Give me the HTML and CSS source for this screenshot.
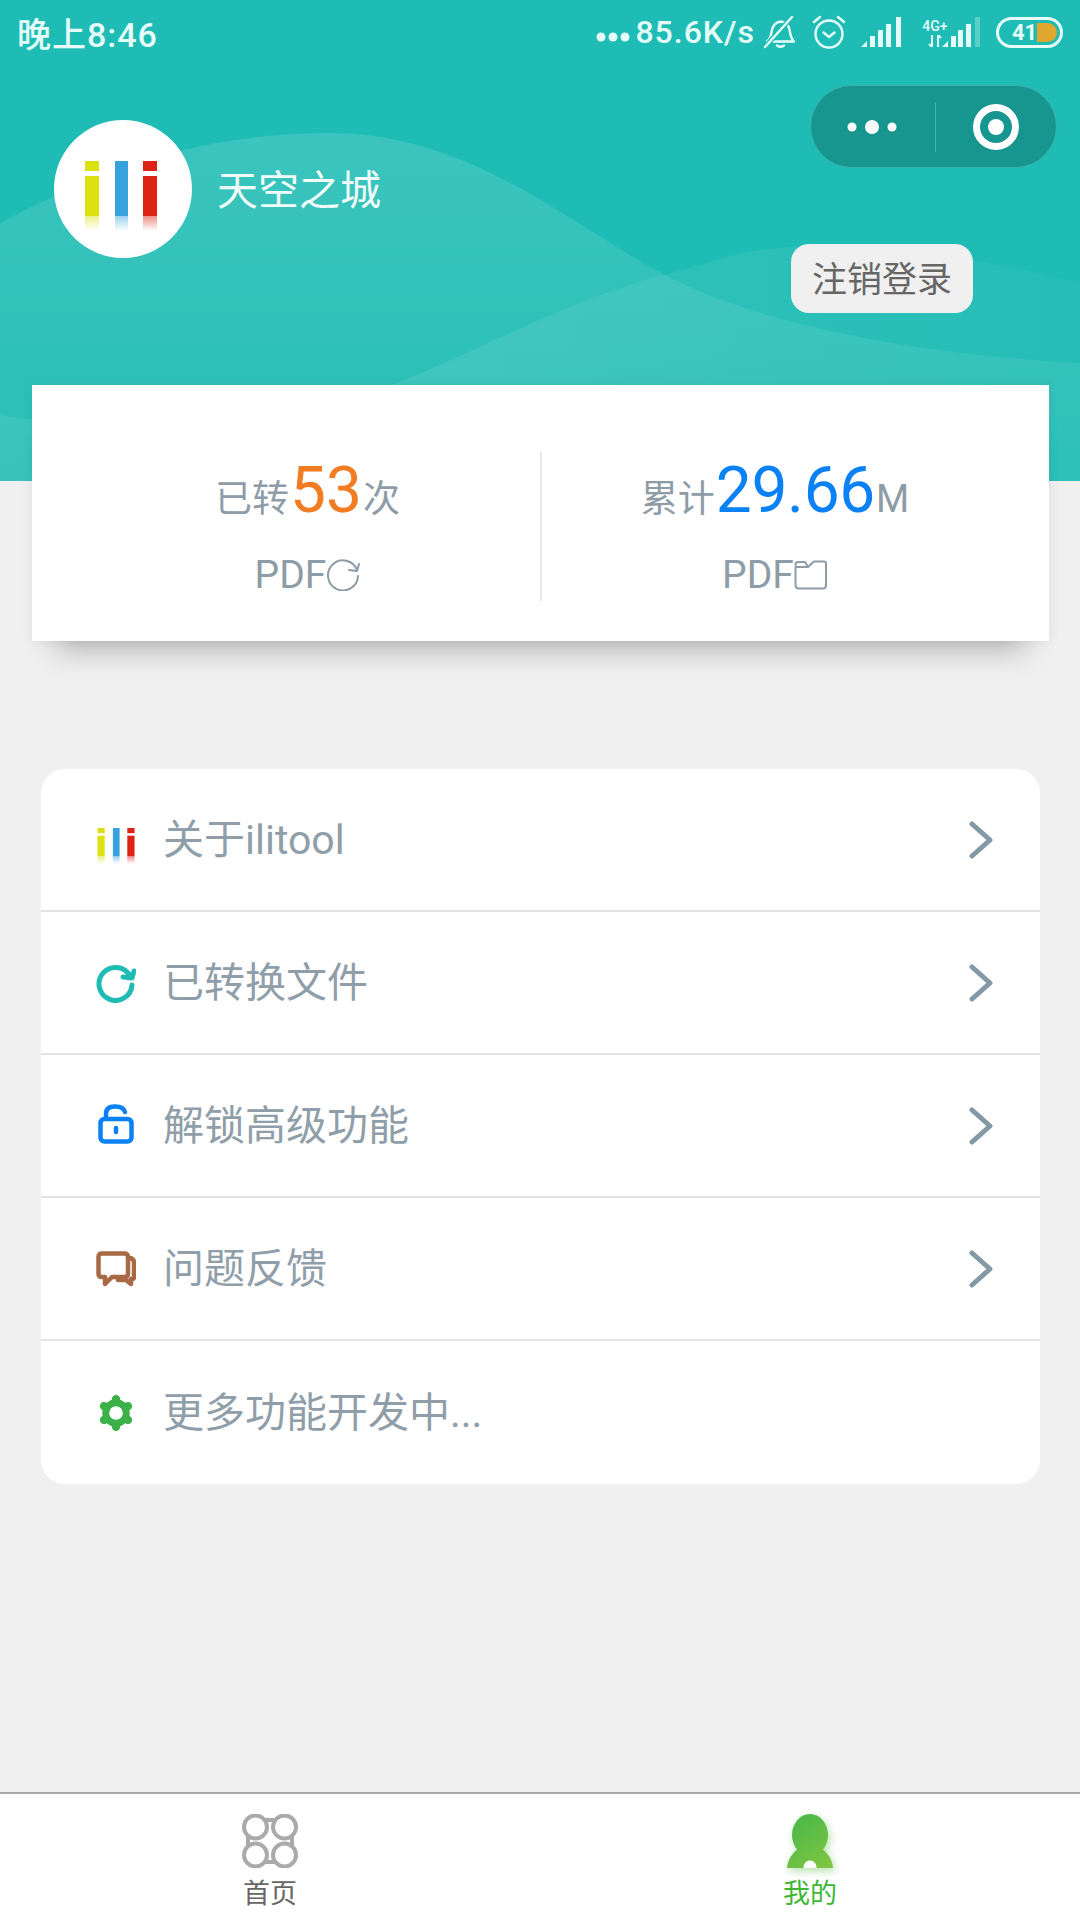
FILE: index.html
```html
<!DOCTYPE html>
<html>
<head>
    <meta charset="utf-8">
    <link rel="stylesheet" href="styles.css">
    <title>ilitool</title>
</head>
<body>
    <svg class="defs" width="0" height="0">
        <defs>
            <linearGradient id="fadeYellow" x1="0" y1="0" x2="0" y2="1"><stop offset="0" stop-color="#dbe20f" stop-opacity=".5"/><stop offset="1" stop-color="#dbe20f" stop-opacity="0"/></linearGradient>
            <linearGradient id="fadeBlue" x1="0" y1="0" x2="0" y2="1"><stop offset="0" stop-color="#36a3dc" stop-opacity=".5"/><stop offset="1" stop-color="#36a3dc" stop-opacity="0"/></linearGradient>
            <linearGradient id="fadeRed" x1="0" y1="0" x2="0" y2="1"><stop offset="0" stop-color="#de2216" stop-opacity=".5"/><stop offset="1" stop-color="#de2216" stop-opacity="0"/></linearGradient>
            <linearGradient id="personFill" gradientUnits="userSpaceOnUse" x1="8" y1="4" x2="42" y2="54"><stop offset="0" stop-color="#4ab748"/><stop offset="1" stop-color="#80c641"/></linearGradient>
            <linearGradient id="waveOne" gradientUnits="userSpaceOnUse" x1="330" y1="132" x2="330" y2="480"><stop offset="0" stop-color="#fff" stop-opacity=".13"/><stop offset="1" stop-color="#fff" stop-opacity=".04"/></linearGradient>
            <linearGradient id="waveTwo" gradientUnits="userSpaceOnUse" x1="500" y1="250" x2="1080" y2="300"><stop offset="0" stop-color="#fff" stop-opacity=".08"/><stop offset="1" stop-color="#fff" stop-opacity=".03"/></linearGradient>
            <symbol id="iliLogo" viewBox="0 0 72 70">
                <rect x="0" y="0" width="14" height="10" fill="#dbe20f"/>
                <rect x="0" y="15" width="14" height="40" fill="#dbe20f"/>
                <rect x="0" y="55" width="14" height="15" fill="url(#fadeYellow)"/>
                <rect x="30" y="0" width="13" height="55" fill="#36a3dc"/>
                <rect x="30" y="55" width="13" height="15" fill="url(#fadeBlue)"/>
                <rect x="58" y="0" width="14" height="10" fill="#de2216"/>
                <rect x="58" y="15" width="14" height="40" fill="#de2216"/>
                <rect x="58" y="55" width="14" height="15" fill="url(#fadeRed)"/>
            </symbol>
            <symbol id="chevronRight" viewBox="0 0 24 38">
                <path d="M3 3L21 19L3 35" fill="none" stroke="#8498a6" stroke-width="5" stroke-linecap="round" stroke-linejoin="round"/>
            </symbol>
        </defs>
    </svg>

    <div class="page">
        <header class="header">
            <svg class="waves" viewBox="0 0 1080 481" preserveAspectRatio="none">
                <path d="M0 223C90 176 190 133 330 133C470 133 570 225 665 275C760 325 920 355 1080 363V481H0Z" fill="url(#waveOne)"/>
                <path d="M0 415C100 432 250 440 392 385C480 350 580 295 665 275C710 262 750 247 800 247C900 247 1000 262 1080 283V481H0Z" fill="url(#waveTwo)"/>
            </svg>

            <div class="statusbar">
                <span class="clock">晚上8:46</span>
                <div class="status-right">
                    <svg class="net-dots" width="34" height="10" viewBox="0 0 34 10" fill="#e6fcfa"><circle cx="5" cy="5" r="4.500"/><circle cx="17" cy="5" r="4.500"/><circle cx="29" cy="5" r="4.500"/></svg>
                    <span class="net-speed">85.6K/s</span>
                    <svg class="st-bell" width="34" height="34" viewBox="0 0 34 34" fill="none" stroke="#e6fcfa" stroke-width="2.400" stroke-linecap="round" stroke-linejoin="round">
                        <path d="M4 26.500H31C28 23.500 27.500 21 27 17C26.500 12 25 7.500 18 6.500C11 7.500 9.500 12 8.500 17C8 21 7 24 4 26.500Z"/>
                        <path d="M14 30.500Q17.500 33 21 30.500"/>
                        <path d="M2 32L29 2" stroke="#1ebcb4" stroke-width="5"/>
                        <path d="M2 32L29 2"/>
                    </svg>
                    <svg class="st-alarm" width="34" height="36" viewBox="0 0 34 36" fill="none" stroke="#e6fcfa" stroke-width="2.400" stroke-linecap="round" stroke-linejoin="round">
                        <circle cx="17" cy="20" r="13.500"/>
                        <path d="M11.500 18.500L17 23L22.500 18.500"/>
                        <path d="M2 8L8 3"/>
                        <path d="M32 8L26 3"/>
                    </svg>
                    <svg class="st-signal" width="40" height="30" viewBox="0 0 40 30" fill="#e6fcfa">
                        <path d="M0 30L6 24V30Z"/>
                        <rect x="9" y="19" width="5" height="11"/>
                        <rect x="17" y="13" width="5" height="17"/>
                        <rect x="25" y="7" width="5" height="23"/>
                        <rect x="35" y="0" width="5" height="30"/>
                    </svg>
                    <div class="st-net">
                        <div class="st-net-left">
                            <span class="st-4g">4G+</span>
                            <svg width="14" height="12" viewBox="0 0 14 12" fill="none" stroke="#e6fcfa" stroke-width="2"><path d="M4 0V12M1 9L4 12"/><path d="M10 12V0M13 3L10 0"/></svg>
                        </div>
                        <svg class="st-signal-2" width="40" height="30" viewBox="0 0 40 30" fill="#e6fcfa">
                            <path d="M2 30L8 24V30Z"/>
                            <rect x="11" y="19" width="5" height="11"/>
                            <rect x="18" y="13" width="5" height="17"/>
                            <rect x="26" y="7" width="5" height="23"/>
                            <rect x="35" y="0" width="5" height="30" fill-opacity=".3"/>
                        </svg>
                    </div>
                    <div class="battery"><span class="battery-fill"></span><span class="battery-num">41</span></div>
                </div>
            </div>

            <div class="capsule">
                <svg width="50" height="14" viewBox="0 0 50 14" fill="#fff"><circle cx="5" cy="7" r="4.500"/><circle cx="25" cy="7" r="7"/><circle cx="45" cy="7" r="4.500"/></svg>
                <span class="capsule-line"></span>
                <svg width="46" height="46" viewBox="0 0 46 46"><circle cx="23" cy="23" r="19.500" fill="none" stroke="#fff" stroke-width="7"/><circle cx="23" cy="23" r="8" fill="#fff"/></svg>
            </div>

            <div class="profile">
                <div class="avatar"><svg width="72" height="70"><use href="#iliLogo"/></svg></div>
                <span class="nickname">天空之城</span>
                <button class="logout">注销登录</button>
            </div>
        </header>

        <section class="stats">
            <div class="stat">
                <div class="stat-main"><span>已转</span><span class="stat-num orange">53</span><span>次</span></div>
                <div class="stat-sub">PDF
                    <svg width="34" height="32" viewBox="0 0 34 32" fill="none" stroke="#8d9ca6" stroke-width="2" stroke-linecap="round" stroke-linejoin="round"><path d="M31 11A15 15 0 1 0 32 17"/><path d="M23 11L31 12L33 5"/></svg>
                </div>
            </div>
            <div class="stat stat-right">
                <div class="stat-main"><span>累计</span><span class="stat-num blue">29.66</span><span class="stat-m">M</span></div>
                <div class="stat-sub">PDF
                    <svg width="34" height="30" viewBox="0 0 34 30" fill="none" stroke="#8d9ca6" stroke-width="2" stroke-linecap="round" stroke-linejoin="round"><path d="M1.500 5Q1.500 2 4 2H11L14 7H1.500V25Q1.500 28.500 5 28.500H29Q32 28.500 32 25V3Q32 1.500 30 1.500H20L14 7"/></svg>
                </div>
            </div>
        </section>

        <ul class="menu">
            <li class="menu-row">
                <span class="menu-icon icon-ili"><svg width="38" height="36"><use href="#iliLogo"/></svg></span>
                <span class="menu-text">关于ilitool</span>
                <svg class="chevron" width="24" height="38"><use href="#chevronRight"/></svg>
            </li>
            <li class="menu-row">
                <span class="menu-icon"><svg width="40" height="40" viewBox="0 0 40 40" fill="none" stroke="#1ebcb4" stroke-width="5" stroke-linecap="round"><path d="M34 13A16.500 16.500 0 1 0 36 22"/><path d="M27 14L36 15L38 8" stroke-linejoin="round" fill="#1ebcb4"/></svg></span>
                <span class="menu-text">已转换文件</span>
                <svg class="chevron" width="24" height="38"><use href="#chevronRight"/></svg>
            </li>
            <li class="menu-row">
                <span class="menu-icon icon-lock"><svg width="36" height="40" viewBox="0 0 36 40" fill="none" stroke="#0a82f5" stroke-width="4.500" stroke-linecap="round"><rect x="2.500" y="15" width="31" height="22.500" rx="4"/><path d="M8 15V10C8 4 12 2.500 17 2.500C22 2.500 26 4 27 8"/><path d="M18 24V28"/></svg></span>
                <span class="menu-text">解锁高级功能</span>
                <svg class="chevron" width="24" height="38"><use href="#chevronRight"/></svg>
            </li>
            <li class="menu-row">
                <span class="menu-icon"><svg width="40" height="36" viewBox="0 0 40 36" fill="none" stroke="#a86a45" stroke-width="4.500" stroke-linejoin="round" stroke-linecap="round"><path d="M6 2.500H28Q32 2.500 32 6V23Q32 26 28 26H16L9 33V26H6Q2.500 26 2.500 23V6Q2.500 2.500 6 2.500Z"/><path d="M33 7Q38 7 38 12V26Q38 28 35 28V33L30 29H22"/></svg></span>
                <span class="menu-text">问题反馈</span>
                <svg class="chevron" width="24" height="38"><use href="#chevronRight"/></svg>
            </li>
            <li class="menu-row">
                <span class="menu-icon"><svg width="36" height="38" viewBox="0 0 34 36" fill="#3cb14a" stroke="#3cb14a" stroke-width="8" stroke-linecap="round"><circle cx="17" cy="18" r="10" stroke-width="6"/><path d="M17 5V31M5.700 11.500L28.300 24.500M28.300 11.500L5.700 24.500"/><circle cx="17" cy="18" r="6.500" fill="#fff" stroke="none"/></svg></span>
                <span class="menu-text">更多功能开发中...</span>
            </li>
        </ul>

        <nav class="tabbar">
            <a class="tab">
                <svg width="56" height="54" viewBox="0 0 56 54" fill="none" stroke="#aaa" stroke-width="4"><circle cx="13.500" cy="13" r="11.500"/><circle cx="42.500" cy="13" r="11.500"/><circle cx="13.500" cy="41" r="11.500"/><circle cx="42.500" cy="41" r="11.500"/><path d="M22 6H34M22 48H34M6 22V32M50 22V32"/></svg>
                <span>首页</span>
            </a>
            <a class="tab tab-active">
                <svg class="person" width="48" height="54" viewBox="0 0 48 54"><ellipse cx="24" cy="21" rx="18" ry="21" fill="url(#personFill)"/><path d="M1 54C2 42 12 31 24 31C36 31 46 42 47 54Z" fill="url(#personFill)"/><path d="M17.500 54C17.500 44 30.500 44 30.500 54Z" fill="#fff"/></svg>
                <span>我的</span>
            </a>
        </nav>
    </div>
</body>
</html>
```
FILE: styles.css
```css
* {
    box-sizing: border-box;
}

body {
    margin: 0;
    padding: 0;
    background-color: #f0f0f0;
    font-family: Roboto, "Noto Sans CJK SC", sans-serif;
}

.defs {
    display: block;
}

.page {
    display: flex;
    flex-direction: column;
    width: 1080px;
    height: 1920px;
    overflow: hidden;
}

/* top green area */
.header {
    position: relative;
    flex: none;
    height: 481px;
    background-color: #1ebcb4;
    overflow: hidden;
}

.waves {
    position: absolute;
    left: 0;
    top: 0;
    width: 100%;
    height: 100%;
}

.statusbar {
    position: relative;
    display: flex;
    align-items: center;
    justify-content: space-between;
    height: 64px;
    padding: 0 17px;
    color: #e6fcfa;
}

.clock {
    font-size: 34px;
    font-weight: 500;
    letter-spacing: 1px;
}

.status-right {
    display: flex;
    align-items: center;
}

.net-dots {
    margin: 10px 5px 0 0;
}

.net-speed {
    font-size: 32px;
    font-weight: 500;
    letter-spacing: 1px;
}

.st-bell {
    margin-left: 8px;
}

.st-alarm {
    margin-left: 15px;
}

.st-signal {
    margin-left: 15px;
}

.st-net {
    display: flex;
    align-items: flex-end;
    margin-left: 19px;
}

.st-net-left {
    display: flex;
    flex-direction: column;
    align-items: center;
    width: 30px;
}

.st-4g {
    font-size: 14px;
    font-weight: 500;
    line-height: 18px;
}

.st-signal-2 {
    margin-left: -10px;
}

.battery {
    position: relative;
    display: flex;
    align-items: center;
    justify-content: center;
    width: 67px;
    height: 31px;
    margin-left: 16px;
    border: 3px solid #e6fcfa;
    border-radius: 16px;
    padding-right: 10px;
}

.battery-fill {
    position: absolute;
    right: 3px;
    top: 3px;
    width: 20px;
    height: 19px;
    background-color: #e0a62e;
    border-radius: 0 10px 10px 0;
}

.battery-num {
    position: relative;
    font-size: 22px;
    font-weight: 700;
    line-height: 25px;
}

/* the wechat capsule sits over the page */
.capsule {
    position: absolute;
    left: 810px;
    top: 85px;
    display: flex;
    align-items: center;
    width: 247px;
    height: 83px;
    padding: 0 37px 0 36px;
    justify-content: space-between;
    background-color: #17958f;
    border: 1px solid #3ab3ad;
    border-radius: 42px;
}

.capsule-line {
    width: 1px;
    height: 50px;
    background-color: #4ab0ab;
}

.profile {
    position: relative;
    display: flex;
    align-items: flex-start;
    padding: 56px 107px 0 54px;
}

.avatar {
    display: flex;
    align-items: center;
    justify-content: center;
    flex: none;
    width: 138px;
    height: 138px;
    padding: 14px 5px 0 0;
    background-color: #fff;
    border-radius: 50%;
}

.nickname {
    margin: 46px 0 0 25px;
    font-size: 41px;
    line-height: 50px;
    color: #f0fbfa;
}

.logout {
    margin: 124px 0 0 auto;
    width: 182px;
    height: 69px;
    padding: 0 0 4px;
    border: none;
    border-radius: 18px;
    background-color: #f0f0f0;
    color: #666;
    font-family: inherit;
    font-size: 35px;
}

/* stats card */
.stats {
    position: relative;
    display: grid;
    grid-template-columns: 465px 1fr;
    flex: none;
    height: 256px;
    margin: -96px 31px 0 32px;
    padding: 67px 41px 40px 43px;
    background-color: #fff;
    box-shadow: 0 30px 30px -24px rgba(0, 0, 0, .3), 0 0 10px rgba(0, 0, 0, .06);
}

.stat {
    display: flex;
    flex-direction: column;
    align-items: center;
}

.stat-right {
    border-left: 2px solid #e8e8e8;
}

.stat-main {
    display: flex;
    align-items: baseline;
    height: 72px;
    padding-top: 3px;
    font-size: 37px;
    line-height: 72px;
    color: #8d9ca6;
}

.stat-num {
    margin: 0 1px;
    font-size: 64px;
}

.blue {
    color: #0a82f5;
    letter-spacing: -.3px;
}

.stat-m {
    font-size: 38px;
}

.orange {
    color: #f27c21;
}

.stat-sub {
    display: flex;
    align-items: center;
    height: 50px;
    margin-top: 26px;
    font-size: 39px;
    color: #8d9ca6;
}

/* menu list */
.menu {
    flex: none;
    margin: 128px 40px 0 41px;
    padding: 0;
    list-style-type: none;
    background-color: #fff;
    border-radius: 24px;
}

.menu-row {
    display: flex;
    align-items: center;
    height: 143px;
    padding: 0 47px 0 55px;
    border-bottom: 2px solid #e2e2e2;
}

.menu-row:last-child {
    border-bottom: none;
}

.menu-icon {
    display: flex;
    align-items: center;
    justify-content: center;
    flex: none;
    width: 40px;
    margin-right: 27px;
}

.icon-ili {
    padding-top: 12px;
}

.icon-lock {
    padding-bottom: 4px;
}

.menu-text {
    margin-bottom: 7px;
    font-size: 41px;
    color: #8f9ea8;
}

.chevron {
    margin-left: auto;
}

/* bottom tabs */
.tabbar {
    display: flex;
    flex: none;
    height: 128px;
    margin-top: auto;
    padding-top: 20px;
    background-color: #fff;
    border-top: 2px solid #a8a8a8;
}

.tab {
    flex: 1;
    display: flex;
    flex-direction: column;
    align-items: center;
    font-size: 27px;
    line-height: 36px;
    color: #666;
}

.tab span {
    margin-top: 8px;
}

.tab-active {
    color: #3eb834;
}

.person {
    filter: drop-shadow(2px 3px 4px rgba(90, 190, 70, .45));
}
```
